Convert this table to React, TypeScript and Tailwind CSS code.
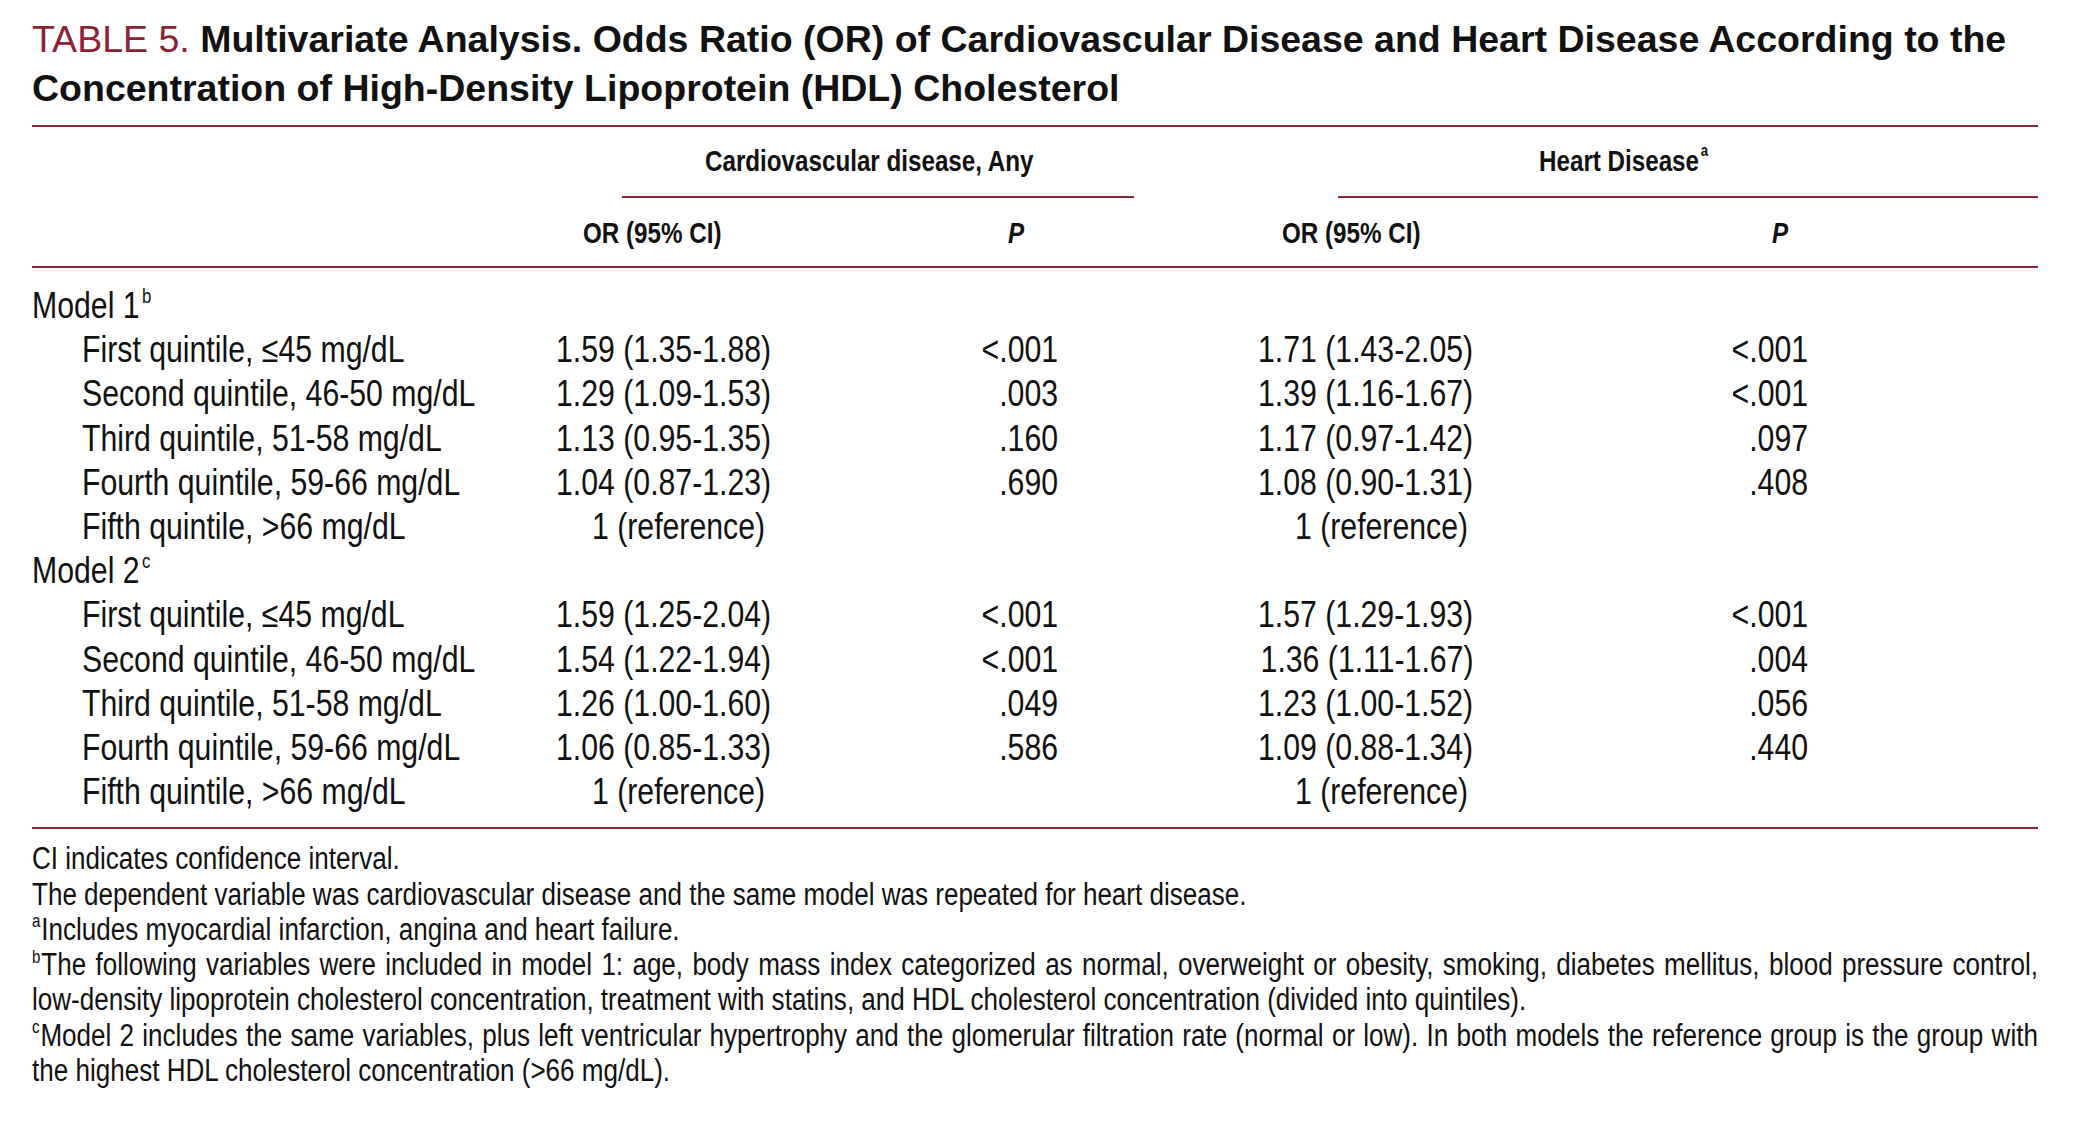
const sans = "font-['Liberation_Sans',Arial,sans-serif]";

// no condensed face installed: squeeze Liberation Sans like Arial Narrow
const nl = "inline-block whitespace-nowrap origin-left scale-x-[0.84]";
const nr = "inline-block whitespace-nowrap origin-right scale-x-[0.84]";
const hl = "inline-block whitespace-nowrap origin-left scale-x-[0.82]";

type Row = [string, string, string, string, string];

const model1: Row[] = [
  ["First quintile, ≤45 mg/dL", "1.59 (1.35-1.88)", "<.001", "1.71 (1.43-2.05)", "<.001"],
  ["Second quintile, 46-50 mg/dL", "1.29 (1.09-1.53)", ".003", "1.39 (1.16-1.67)", "<.001"],
  ["Third quintile, 51-58 mg/dL", "1.13 (0.95-1.35)", ".160", "1.17 (0.97-1.42)", ".097"],
  ["Fourth quintile, 59-66 mg/dL", "1.04 (0.87-1.23)", ".690", "1.08 (0.90-1.31)", ".408"],
  ["Fifth quintile, >66 mg/dL", "1 (reference)", "", "1 (reference)", ""],
];

const model2: Row[] = [
  ["First quintile, ≤45 mg/dL", "1.59 (1.25-2.04)", "<.001", "1.57 (1.29-1.93)", "<.001"],
  ["Second quintile, 46-50 mg/dL", "1.54 (1.22-1.94)", "<.001", "1.36 (1.11-1.67)", ".004"],
  ["Third quintile, 51-58 mg/dL", "1.26 (1.00-1.60)", ".049", "1.23 (1.00-1.52)", ".056"],
  ["Fourth quintile, 59-66 mg/dL", "1.06 (0.85-1.33)", ".586", "1.09 (0.88-1.34)", ".440"],
  ["Fifth quintile, >66 mg/dL", "1 (reference)", "", "1 (reference)", ""],
];

const grid = "grid grid-cols-[498px_250px_290px_410px_1fr]";

function Rule() {
  return <div className="h-[2px] bg-[#86283a]" />;
}

function ModelLabel({ n, sup }: { n: number; sup: string }) {
  return (
    <div className={`${grid} h-[44.2px] leading-[44.2px]`}>
      <div>
        <span className={nl}>
          Model {n}
          <sup className="text-[20px] top-[-0.75em] ml-[3px]">{sup}</sup>
        </span>
      </div>
    </div>
  );
}

function DataRow({ row }: { row: Row }) {
  const ref = row[1] === "1 (reference)";
  return (
    <div className={`${grid} h-[44.2px] leading-[44.2px]`}>
      <div className="pl-[50px]">
        <span className={nl}>{row[0]}</span>
      </div>
      <div className={`flex justify-end ${ref ? "pr-[15px]" : "pr-[9px]"}`}>
        <span className={nr}>{row[1]}</span>
      </div>
      <div className="flex justify-end pr-[12px]">
        <span className={nr}>{row[2]}</span>
      </div>
      <div className={`flex justify-end ${ref ? "pr-[12px]" : "pr-[7px]"}`}>
        <span className={nr}>{row[3]}</span>
      </div>
      <div className="flex justify-end w-[328px]">
        <span className={nr}>{row[4]}</span>
      </div>
    </div>
  );
}

function Note({ sup, children, full }: { sup?: string; children: React.ReactNode; full?: boolean }) {
  return (
    <div className="h-[35.3px] leading-[35.3px]">
      <span className={`${nl} ${full ? "w-[2388px] text-justify [text-align-last:justify]" : ""}`}>
        {sup && <sup className="text-[18px] top-[-0.7em] mr-[1px]">{sup}</sup>}
        {children}
      </span>
    </div>
  );
}

export default function App() {
  return (
    <div className={`w-[2075px] h-[1129px] overflow-hidden bg-white pl-[32px] pr-[37px] pt-[15px] text-[#111] ${sans}`}>
      <h1 className="text-[37.5px] leading-[49px] font-bold whitespace-nowrap">
        <span className="font-normal text-[#8b2236]">TABLE 5.</span> Multivariate Analysis. Odds Ratio (OR) of
        Cardiovascular Disease and Heart Disease According to the
        <br />
        Concentration of High-Density Lipoprotein (HDL) Cholesterol
      </h1>

      <div className="mt-[12px]">
        <Rule />
      </div>

      {/* group headers */}
      <div className={`${grid} mt-[14px] h-[40px] leading-[40px] text-[29.5px] font-bold`}>
        <div />
        <div className="col-span-2 pl-[175px]">
          <span className={hl}>Cardiovascular disease, Any</span>
        </div>
        <div className="col-span-2 pl-[469px]">
          <span className={hl}>
            Heart Disease
            <sup className="text-[16px] top-[-0.95em] ml-[2px]">a</sup>
          </span>
        </div>
      </div>

      <div className="flex mt-[15px]">
        <div className="ml-[590px] w-[512px] h-[2px] bg-[#86283a]" />
        <div className="ml-[204px] flex-1 h-[2px] bg-[#86283a]" />
      </div>

      {/* column headers */}
      <div className={`${grid} mt-[15px] h-[40px] leading-[40px] text-[29.5px] font-bold`}>
        <div />
        <div className="pl-[53px]">
          <span className={hl}>OR (95% CI)</span>
        </div>
        <div className="pl-[228px] italic">
          <span className={hl}>P</span>
        </div>
        <div className="pl-[212px]">
          <span className={hl}>OR (95% CI)</span>
        </div>
        <div className="pl-[292px] italic">
          <span className={hl}>P</span>
        </div>
      </div>

      <div className="mt-[13px]">
        <Rule />
      </div>

      <div className="mt-[16px] text-[36px]">
        <ModelLabel n={1} sup="b" />
        {model1.map((r) => (
          <DataRow key={"m1" + r[0]} row={r} />
        ))}
        <ModelLabel n={2} sup="c" />
        {model2.map((r) => (
          <DataRow key={"m2" + r[0]} row={r} />
        ))}
      </div>

      <div className="mt-[13px]">
        <Rule />
      </div>

      <div className="mt-[12px] text-[31px]">
        <Note>CI indicates confidence interval.</Note>
        <Note>The dependent variable was cardiovascular disease and the same model was repeated for heart disease.</Note>
        <Note sup="a">Includes myocardial infarction, angina and heart failure.</Note>
        <Note sup="b" full>
          The following variables were included in model 1: age, body mass index categorized as normal, overweight or
          obesity, smoking, diabetes mellitus, blood pressure control,
        </Note>
        <Note>
          low-density lipoprotein cholesterol concentration, treatment with statins, and HDL cholesterol concentration
          (divided into quintiles).
        </Note>
        <Note sup="c" full>
          Model 2 includes the same variables, plus left ventricular hypertrophy and the glomerular filtration rate
          (normal or low). In both models the reference group is the group with
        </Note>
        <Note>the highest HDL cholesterol concentration (&gt;66 mg/dL).</Note>
      </div>
    </div>
  );
}
